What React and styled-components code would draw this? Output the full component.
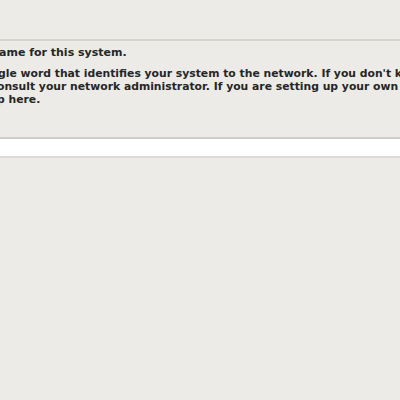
import React from "react";
import styled, { createGlobalStyle } from "styled-components";

const Global = createGlobalStyle`
  html, body { margin: 0; padding: 0; }
  body { background: #edebe7; }
`;

const Page = styled.div`
  width: 400px;
  height: 400px;
  overflow: hidden;
  background: #edebe7;
  font-family: "DejaVu Sans", "Liberation Sans", sans-serif;
  color: #262626;
  display: flex;
  flex-direction: column;
`;

const Banner = styled.div`
  height: 39px;
  flex: none;
  border-bottom: 2px solid #d9d3cd;
`;

const Content = styled.div`
  padding-top: 5px;
  display: flex;
  flex-direction: column;
`;

const Line = styled.div`
  font-size: 10.8px;
  line-height: 13px;
  font-weight: bold;
  white-space: nowrap;
  margin-left: ${(p) => p.$cut || 0}px;
`;

const Question = styled(Line)`
  font-size: 11px;
  margin-bottom: 8px;
`;

const Field = styled.div`
  margin-top: 31px;
  height: 17px;
  background: #ffffff;
  border-top: 2px solid #d2cbc5;
  border-bottom: 2px solid #e0dbd6;
`;

export default function App() {
  return (
    <>
      <Global />
      <Page>
        <Banner />
        <Content>
          <Question $cut={-1}>ame for this system.</Question>
          <Line $cut={-2}>gle word that identifies your system to the network. If you don't know</Line>
          <Line $cut={-3}>onsult your network administrator. If you are setting up your own</Line>
          <Line $cut={-3}>p here.</Line>
          <Field />
        </Content>
      </Page>
    </>
  );
}
